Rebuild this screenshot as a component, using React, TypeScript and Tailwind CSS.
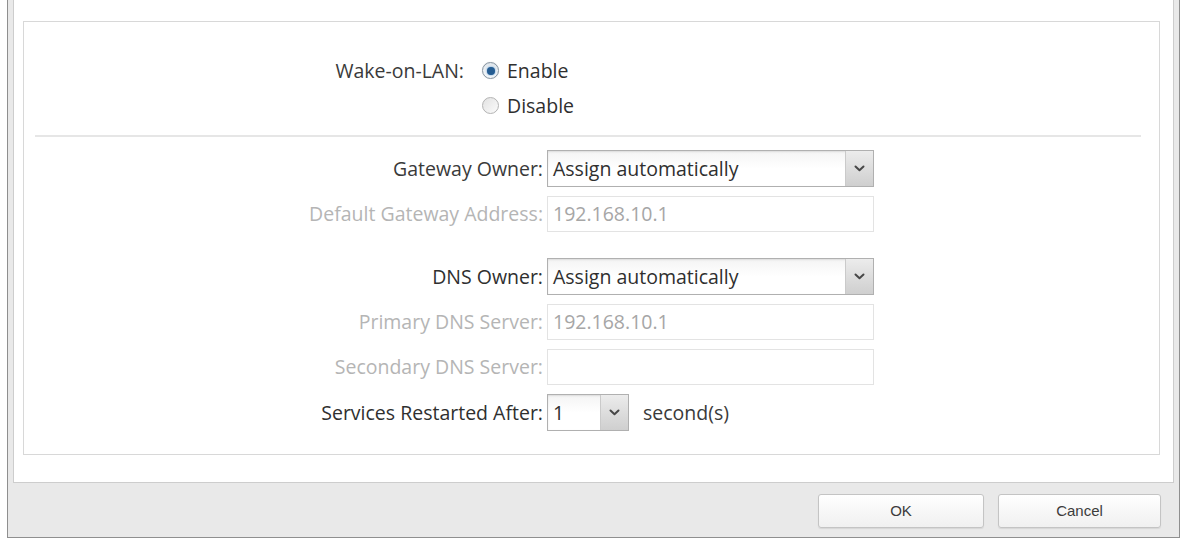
import React from "react";

const font = { fontFamily: '"Open Sans", "Noto Sans", sans-serif' };

function Chevron() {
  return (
    <svg width="11" height="7" viewBox="0 0 11 7" className="block">
      <path d="M1.5 1.5 L5.5 5.2 L9.5 1.5" fill="none" stroke="#474747" strokeWidth="2" strokeLinecap="round" strokeLinejoin="round" />
    </svg>
  );
}

function Select({ value, width }: { value: string; width: string }) {
  return (
    <div className={`flex ${width} h-[37px] border border-[#b0b0b0] bg-gradient-to-b from-[#f4f4f4] via-white to-white shadow-[inset_0_1px_2px_rgba(0,0,0,0.1)]`}>
      <div className="flex-1 flex items-center pl-[5px] text-[#2f2f2f] text-[19.5px] leading-none">{value}</div>
      <div className="w-[28px] flex items-center justify-center border-l border-[#cacaca] bg-gradient-to-b from-[#ececec] to-[#cfcfcf]">
        <Chevron />
      </div>
    </div>
  );
}

function TextBox({ value }: { value?: string }) {
  return (
    <div className="w-[327px] h-[36px] border border-[#e3e3e3] bg-white flex items-center pl-[5px] text-[#a6a6a6] text-[19.5px] leading-none">
      {value}
    </div>
  );
}

function Row({
  label,
  labelColor,
  mt,
  children,
}: {
  label: string;
  labelColor: string;
  mt: string;
  children: React.ReactNode;
}) {
  return (
    <div className={`flex items-center ${mt}`}>
      <div className={`w-[519px] text-right text-[19.5px] leading-none ${labelColor}`}>{label}</div>
      <div className="ml-[4px] flex items-center">{children}</div>
    </div>
  );
}

function Radio({ checked }: { checked: boolean }) {
  if (checked) {
    return (
      <div className="w-[17px] h-[17px] rounded-full border border-[#8593a0] bg-gradient-to-b from-[#dfe6ec] to-[#f7f9fb] flex items-center justify-center shadow-[0_0_1px_rgba(0,0,0,0.2)]">
        <div className="w-[8px] h-[8px] rounded-full bg-[#265d92] shadow-[0_0_2px_#4a8ccc]" />
      </div>
    );
  }
  return (
    <div className="w-[17px] h-[17px] rounded-full border border-[#b3b3b3] bg-gradient-to-br from-[#e2e2e2] to-[#fbfbfb]" />
  );
}

export default function App() {
  return (
    <div className="w-[1185px] h-[543px] bg-white overflow-hidden" style={font}>
      <div className="ml-[7px] w-[1173px] border-x border-b border-[#8f8f8f] bg-[#e9e9e9] px-[5px]">
        {/* white panel */}
        <div className="bg-white border-x border-b border-[#cdcdcd] pt-[21px] pl-[9px] pr-[13px] pb-[27px]">
          {/* inner box */}
          <div className="h-[434px] border border-[#d8d8d8] pt-[31px]">
            {/* Wake-on-LAN */}
            <div className="flex items-center h-[35px]">
              <div className="w-[440px] text-right text-[19.5px] leading-none text-[#3a3a3a]">Wake-on-LAN:</div>
              <div className="ml-[18px] flex items-center">
                <Radio checked />
                <span className="ml-[8px] text-[19.5px] leading-none text-[#2f2f2f]">Enable</span>
              </div>
            </div>
            <div className="flex items-center h-[35px]">
              <div className="w-[440px]" />
              <div className="ml-[18px] flex items-center">
                <Radio checked={false} />
                <span className="ml-[8px] text-[19.5px] leading-none text-[#2f2f2f]">Disable</span>
              </div>
            </div>
            {/* separator */}
            <div className="mt-[12px] ml-[11px] mr-[18px] h-[2px] bg-[#e6e6e6]" />

            <Row label="Gateway Owner:" labelColor="text-[#3a3a3a]" mt="mt-[13px]">
              <Select value="Assign automatically" width="w-[327px]" />
            </Row>
            <Row label="Default Gateway Address:" labelColor="text-[#b5b5b5]" mt="mt-[9px]">
              <TextBox value="192.168.10.1" />
            </Row>
            <Row label="DNS Owner:" labelColor="text-[#2f2f2f]" mt="mt-[26px]">
              <Select value="Assign automatically" width="w-[327px]" />
            </Row>
            <Row label="Primary DNS Server:" labelColor="text-[#b5b5b5]" mt="mt-[9px]">
              <TextBox value="192.168.10.1" />
            </Row>
            <Row label="Secondary DNS Server:" labelColor="text-[#b5b5b5]" mt="mt-[9px]">
              <TextBox />
            </Row>
            <Row label="Services Restarted After:" labelColor="text-[#2f2f2f]" mt="mt-[9px]">
              <Select value="1" width="w-[82px]" />
              <span className="ml-[14px] text-[19.5px] leading-none text-[#3a3a3a]">second(s)</span>
            </Row>
          </div>
        </div>
        {/* footer */}
        <div className="h-[54px] flex justify-end items-start pt-[11px] pr-[13px] gap-[14px]">
          <button
            className="w-[166px] h-[34px] rounded-[3px] border border-[#c4c4c4] bg-gradient-to-b from-white to-[#f0f0f0] text-[15px] text-[#3c3c3c] shadow-[0_1px_1px_rgba(0,0,0,0.08)]"
            style={{ fontFamily: '"Liberation Sans", Arial, sans-serif' }}
          >
            OK
          </button>
          <button
            className="w-[163px] h-[34px] rounded-[3px] border border-[#c4c4c4] bg-gradient-to-b from-white to-[#f0f0f0] text-[15px] text-[#3c3c3c] shadow-[0_1px_1px_rgba(0,0,0,0.08)]"
            style={{ fontFamily: '"Liberation Sans", Arial, sans-serif' }}
          >
            Cancel
          </button>
        </div>
      </div>
    </div>
  );
}
